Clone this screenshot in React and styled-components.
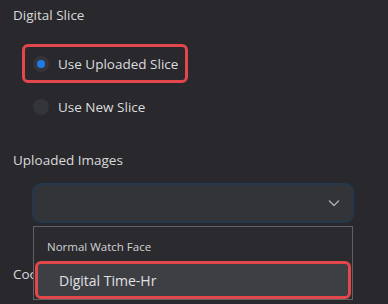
import React from 'react'
import styled, { createGlobalStyle } from 'styled-components'

const Global = createGlobalStyle`
  html, body {
    margin: 0;
    background: #29292d;
    font-family: "Segoe UI", "Open Sans", "Noto Sans", sans-serif;
    color: #d6d6d8;
  }
`

const Panel = styled.div`
  position: relative;
  width: 388px;
  height: 304px;
  overflow: hidden;
  padding: 5px 0 0 13px;
  box-sizing: border-box;
`

const Label = styled.div`
  font-size: 13.5px;
  line-height: 20px;
  color: #d9d9db;
`

const RadioGroup = styled.div`
  display: flex;
  flex-direction: column;
  gap: 4px;
  margin: 19px 0 0 9px;
`

const Option = styled.div`
  display: flex;
  align-items: center;
  gap: 9px;
  width: 166px;
  height: 39px;
  box-sizing: border-box;
  padding-left: 8px;
  border: 3px solid ${props => (props.$marked ? '#e2474b' : 'transparent')};
  border-radius: 6px;
  font-size: 13.5px;
  color: #dcdcde;
`

const Radio = styled.span`
  display: flex;
  align-items: center;
  justify-content: center;
  width: 16px;
  height: 16px;
  border-radius: 50%;
  background: #34353a;
  &::after {
    content: '';
    width: 8px;
    height: 8px;
    border-radius: 50%;
    background: ${props => (props.$checked ? '#1f7ce2' : 'transparent')};
  }
`

const Section = styled.div`
  margin-top: ${props => props.$top}px;
`

const Select = styled.div`
  display: flex;
  align-items: center;
  justify-content: flex-end;
  width: 322px;
  height: 40px;
  box-sizing: border-box;
  margin: 13px 0 0 19px;
  padding-right: 12px;
  background: #333437;
  border: 2px solid #25374b;
  border-radius: 9px;
  color: #a9a9ad;
`

const Menu = styled.div`
  position: absolute;
  left: 33px;
  top: 226px;
  width: 320px;
  height: 74px;
  box-sizing: border-box;
  padding: 12px 1px 0;
  background: #2b2b2f;
  border: 1px solid #616165;
`

const GroupTitle = styled.div`
  font-size: 11.5px;
  line-height: 16px;
  padding-left: 12px;
  color: #d2d2d4;
`

const Item = styled.div`
  display: flex;
  align-items: center;
  margin-top: 6px;
  height: 38px;
  box-sizing: border-box;
  padding-left: 21px;
  background: #3e3f44;
  border: 3px solid #e2474b;
  border-radius: 6px;
  font-size: 14px;
  color: #e0e0e2;
`

const Chevron = () => (
  <svg width="12" height="8" viewBox="0 0 12 8" fill="none">
    <path d="M1 1.5 L6 6.5 L11 1.5" stroke="#aeaeb2" strokeWidth="1.3" />
  </svg>
)

const App = () => (
  <Panel>
    <Global />
    <Label>Digital Slice</Label>
    <RadioGroup>
      <Option $marked>
        <Radio $checked />
        Use Uploaded Slice
      </Option>
      <Option>
        <Radio />
        Use New Slice
      </Option>
    </RadioGroup>
    <Section $top={24}>
      <Label>Uploaded Images</Label>
      <Select>
        <Chevron />
      </Select>
    </Section>
    <Section $top={41}>
      <Label>Coordinates</Label>
    </Section>
    <Menu>
      <GroupTitle>Normal Watch Face</GroupTitle>
      <Item>Digital Time-Hr</Item>
    </Menu>
  </Panel>
)

export default App
